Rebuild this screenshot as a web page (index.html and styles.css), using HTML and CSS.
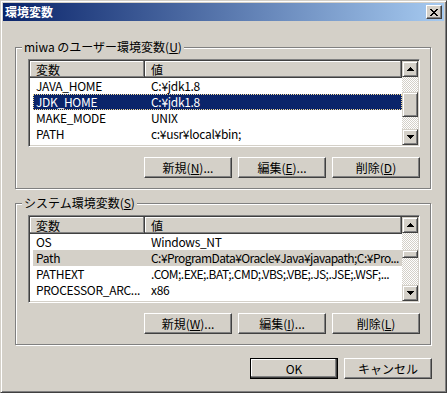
FILE: index.html
```html
<!DOCTYPE html>
<html lang="ja">
<head>
    <meta charset="UTF-8">
    <title>環境変数</title>
    <link rel="stylesheet" href="styles.css">
</head>
<body>
    <div class="window">
        <div class="titlebar">
            <span class="title">環境変数</span>
            <span class="close-btn">
                <svg width="8" height="7" viewBox="0 0 8 7" shape-rendering="crispEdges">
                    <path d="M0 0h2v1H0zM6 0h2v1H6zM1 1h2v1H1zM5 1h2v1H5zM2 2h4v1H2zM3 3h2v1H3zM2 4h4v1H2zM1 5h2v1H1zM5 5h2v1H5zM0 6h2v1H0zM6 6h2v1H6z" fill="#000"/>
                </svg>
            </span>
        </div>
        <div class="content">
            <!-- user variables -->
            <div class="group">
                <span class="group-label">miwa のユーザー環境変数(<u>U</u>)</span>
                <div class="listview">
                    <div class="lv-main">
                        <div class="lv-header">
                            <div class="lv-head c1">変数</div>
                            <div class="lv-head c2">値</div>
                        </div>
                        <div class="lv-row"><div class="c1">JAVA_HOME</div><div class="c2">C:¥jdk1.8</div></div>
                        <div class="lv-row selected"><div class="c1">JDK_HOME</div><div class="c2">C:¥jdk1.8</div></div>
                        <div class="lv-row"><div class="c1">MAKE_MODE</div><div class="c2">UNIX</div></div>
                        <div class="lv-row"><div class="c1">PATH</div><div class="c2">c:¥usr¥local¥bin;</div></div>
                    </div>
                    <div class="scrollbar">
                        <div class="sb-btn">
                            <svg width="7" height="4" viewBox="0 0 7 4" shape-rendering="crispEdges"><path d="M3 0h1v1h1v1h1v1h1v1H0V3h1V2h1V1h1z" fill="#000"/></svg>
                        </div>
                        <div class="sb-track">
                            <div class="sb-thumb thumb-user"></div>
                        </div>
                        <div class="sb-btn">
                            <svg width="7" height="4" viewBox="0 0 7 4" shape-rendering="crispEdges"><path d="M0 0h7v1H6v1H5v1H4v1H3V3H2V2H1V1H0z" fill="#000"/></svg>
                        </div>
                    </div>
                </div>
                <div class="btn-row">
                    <button class="btn">新規(<u>N</u>)...</button>
                    <button class="btn">編集(<u>E</u>)...</button>
                    <button class="btn">削除(<u>D</u>)</button>
                </div>
            </div>

            <!-- system variables -->
            <div class="group">
                <span class="group-label">システム環境変数(<u>S</u>)</span>
                <div class="listview">
                    <div class="lv-main">
                        <div class="lv-header">
                            <div class="lv-head c1">変数</div>
                            <div class="lv-head c2">値</div>
                        </div>
                        <div class="lv-row"><div class="c1">OS</div><div class="c2">Windows_NT</div></div>
                        <div class="lv-row inactive"><div class="c1">Path</div><div class="c2 long">C:¥ProgramData¥Oracle¥Java¥javapath;C:¥Pro...</div></div>
                        <div class="lv-row"><div class="c1">PATHEXT</div><div class="c2 long">.COM;.EXE;.BAT;.CMD;.VBS;.VBE;.JS;.JSE;.WSF;...</div></div>
                        <div class="lv-row"><div class="c1">PROCESSOR_ARC...</div><div class="c2">x86</div></div>
                    </div>
                    <div class="scrollbar">
                        <div class="sb-btn">
                            <svg width="7" height="4" viewBox="0 0 7 4" shape-rendering="crispEdges"><path d="M3 0h1v1h1v1h1v1h1v1H0V3h1V2h1V1h1z" fill="#000"/></svg>
                        </div>
                        <div class="sb-track">
                            <div class="sb-thumb thumb-sys"></div>
                        </div>
                        <div class="sb-btn">
                            <svg width="7" height="4" viewBox="0 0 7 4" shape-rendering="crispEdges"><path d="M0 0h7v1H6v1H5v1H4v1H3V3H2V2H1V1H0z" fill="#000"/></svg>
                        </div>
                    </div>
                </div>
                <div class="btn-row">
                    <button class="btn">新規(<u>W</u>)...</button>
                    <button class="btn">編集(<u>I</u>)...</button>
                    <button class="btn">削除(<u>L</u>)</button>
                </div>
            </div>

            <div class="dialog-btns">
                <button class="btn default">OK</button>
                <button class="btn">キャンセル</button>
            </div>
        </div>
    </div>
</body>
</html>
```

FILE: styles.css
```css
/* Classic dialog look */
* {
    box-sizing: border-box;
}
html, body {
    margin: 0;
    background-color: #d4d0c8;
}
body {
    font-family: "Noto Sans CJK JP", "Liberation Sans", sans-serif;
    font-size: 12px;
    color: #000;
}
.window {
    width: 447px;
    height: 393px;
    padding: 2px;
    border: 1px solid;
    border-color: #d4d0c8 #404040 #404040 #d4d0c8;
    box-shadow: inset 1px 1px #fff, inset -1px -1px #808080;
    background-color: #d4d0c8;
}
.titlebar {
    height: 18px;
    padding: 2px 2px 0 2px;
    display: flex;
    align-items: flex-start;
    justify-content: space-between;
    background: linear-gradient(to right, #0a246a, #a6caf0);
}
.title {
    color: #fff;
    font-weight: bold;
    line-height: 14px;
}
.close-btn {
    width: 16px;
    height: 14px;
    display: flex;
    align-items: center;
    justify-content: center;
    border: 1px solid;
    border-color: #fff #404040 #404040 #fff;
    box-shadow: inset -1px -1px #808080;
    background-color: #d4d0c8;
}
.content {
    padding: 26px 0 0 12px;
}
.group {
    position: relative;
    width: 416px;
    padding: 11px 10px 10px 12px;
    border: 1px solid #808080;
    box-shadow: 1px 1px 0 #fff, inset 1px 1px 0 #fff;
}
.group + .group {
    margin-top: 14px;
}
.group-label {
    position: absolute;
    top: -8px;
    left: 6px;
    padding: 0 2px;
    line-height: 14px;
    background-color: #d4d0c8;
    white-space: nowrap;
}
.listview {
    display: flex;
    height: 88px;
    padding: 1px;
    border: 1px solid;
    border-color: #808080 #fff #fff #808080;
    box-shadow: inset 1px 1px #404040, inset -1px -1px #d4d0c8;
}
.lv-main {
    flex: 1;
    overflow: hidden;
    background-color: #fff;
}
.lv-header {
    display: flex;
    height: 17px;
}
.lv-head {
    padding-left: 6px;
    line-height: 17px;
    background-color: #d4d0c8;
    box-shadow: inset -1px -1px #404040, inset -2px -2px #808080, inset 1px 1px #fff;
}
.lv-head.c1 {
    width: 115px;
}
.lv-head.c2 {
    flex: 1;
}
.lv-row {
    display: flex;
    height: 16px;
    margin-left: 3px;
    line-height: 16px;
    letter-spacing: -0.3px;
    white-space: nowrap;
}
.lv-row .c1 {
    width: 112px;
    padding-left: 3px;
    overflow: hidden;
}
.lv-row .c2 {
    flex: 1;
    padding-left: 6px;
    overflow: hidden;
}
.lv-row .long {
    letter-spacing: -0.55px;
}
.lv-row.selected {
    background-color: #0a246a;
    color: #fff;
    outline: 1px dotted #f5db95;
    outline-offset: -1px;
}
.lv-row.inactive {
    background-color: #d4d0c8;
}
.scrollbar {
    width: 16px;
    display: flex;
    flex-direction: column;
}
.sb-btn, .sb-thumb {
    border: 1px solid;
    border-color: #d4d0c8 #404040 #404040 #d4d0c8;
    box-shadow: inset 1px 1px #fff, inset -1px -1px #808080;
    background-color: #d4d0c8;
}
.sb-btn {
    height: 16px;
    display: flex;
    align-items: center;
    justify-content: center;
}
.sb-track {
    flex: 1;
    background-color: #fff;
    background-image: repeating-conic-gradient(#d4d0c8 0 25%, #fff 0 50%);
    background-size: 2px 2px;
}
.thumb-user {
    margin-top: 15px;
    height: 25px;
}
.thumb-sys {
    margin-top: 17px;
    height: 8px;
}
.btn-row, .dialog-btns {
    display: flex;
    justify-content: flex-end;
    gap: 6px;
}
.btn-row {
    margin-top: 10px;
}
.dialog-btns {
    margin-top: 13px;
    padding-right: 12px;
}
.btn {
    width: 88px;
    height: 21px;
    padding: 0;
    border: 1px solid;
    border-color: #fff #404040 #404040 #fff;
    box-shadow: inset -1px -1px #808080;
    background-color: #d4d0c8;
    font: inherit;
    color: #000;
    line-height: 19px;
    text-align: center;
}
.btn.default {
    border-color: #000;
    box-shadow: inset -1px -1px #404040, inset -2px -2px #808080, inset 1px 1px #fff;
}
```
